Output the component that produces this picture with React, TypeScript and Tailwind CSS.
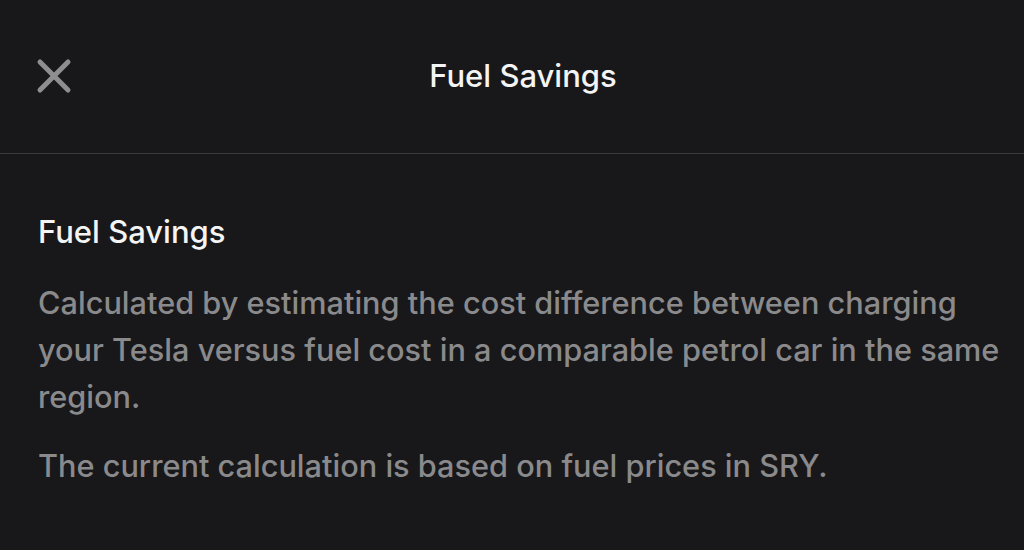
import React from "react";

export default function App() {
  return (
    <div className="w-[1024px] h-[550px] bg-[#18181a] overflow-hidden" style={{ fontFamily: "Inter, 'Liberation Sans', sans-serif" }}>
      <div className="relative h-[154px] border-b border-[#3a3a3c] flex items-center justify-center pl-[22px] pb-[3px]">
        <svg className="absolute left-[36px] top-[58px]" width="36" height="36" viewBox="0 0 36 36">
          <path d="M4 4 L32 32 M32 4 L4 32" stroke="#8e8e90" strokeWidth="5" strokeLinecap="round" />
        </svg>
        <div className="text-[31px] text-[#f4f4f4] font-medium leading-none">Fuel Savings</div>
      </div>
      <div className="pl-[38px] pr-[4px] pt-[58px]">
        <div className="text-[31px] text-[#f4f4f4] font-medium leading-[40px]">Fuel Savings</div>
        <p className="mt-[27px] text-[30.7px] text-[#8a8a8c] font-medium leading-[47px]">
          Calculated by estimating the cost difference between charging your Tesla versus fuel cost in a comparable petrol car in the same region.
        </p>
        <p className="mt-[22px] text-[30.7px] text-[#8a8a8c] font-medium leading-[47px]">
          The current calculation is based on fuel prices in SRY.
        </p>
      </div>
    </div>
  );
}
